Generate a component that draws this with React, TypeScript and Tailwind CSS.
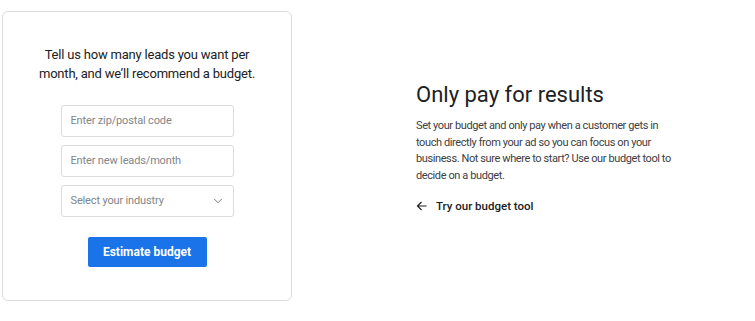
import { ChevronDown } from "lucide-react";

const fields = ["Enter zip/postal code", "Enter new leads/month"];

const App = () => {
  return (
    <div className="min-h-screen bg-white font-['Roboto',sans-serif]">
      <div className="flex items-start pl-[2px] pt-[11px]">
        <div className="flex h-[290px] w-[290px] flex-col items-center rounded-[6px] border border-[#dadce0] pt-[33px]">
          <p className="w-[240px] text-center text-[13px] leading-[19px] tracking-[-0.2px] text-[#202124]">
            Tell us how many leads you want per month, and we’ll recommend a budget.
          </p>
          <div className="mt-[22px] flex w-[173px] flex-col gap-[8px]">
            {fields.map((f) => (
              <div
                key={f}
                className="flex h-[32px] items-center rounded-[3px] border border-[#dadce0] px-[9px] text-[11px] tracking-[-0.15px] text-[#80868b]"
              >
                {f}
              </div>
            ))}
            <div className="flex h-[32px] items-center justify-between rounded-[3px] border border-[#dadce0] pl-[9px] pr-[8px] text-[11px] tracking-[-0.15px] text-[#80868b]">
              <span>Select your industry</span>
              <ChevronDown size={14} strokeWidth={1.5} className="text-[#5f6368]" />
            </div>
          </div>
          <button className="mt-[20px] h-[30px] w-[119px] rounded-[2px] bg-[#1a73e8] text-[12px] font-bold text-white">
            Estimate budget
          </button>
        </div>

        <div className="ml-[124px] mt-[70px] w-[270px]">
          <h2 className="text-[22px] leading-[28px] text-[#202124]">Only pay for results</h2>
          <p className="mt-[9px] text-[11px] leading-[16.7px] tracking-[-0.4px] text-[#3c4043]">
            Set your budget and only pay when a customer gets in touch directly from your ad so you can focus on your
            business. Not sure where to start? Use our budget tool to decide on a budget.
          </p>
          <a className="mt-[13px] flex items-center gap-[8px] text-[11.5px] font-medium text-[#202124]">
            <svg width="12" height="12" viewBox="0 0 24 24" fill="none" stroke="#202124" strokeWidth="2.4">
              <path d="M21 12H4M11 4l-8 8 8 8" />
            </svg>
            Try our budget tool
          </a>
        </div>
      </div>
    </div>
  );
};

export default App;
